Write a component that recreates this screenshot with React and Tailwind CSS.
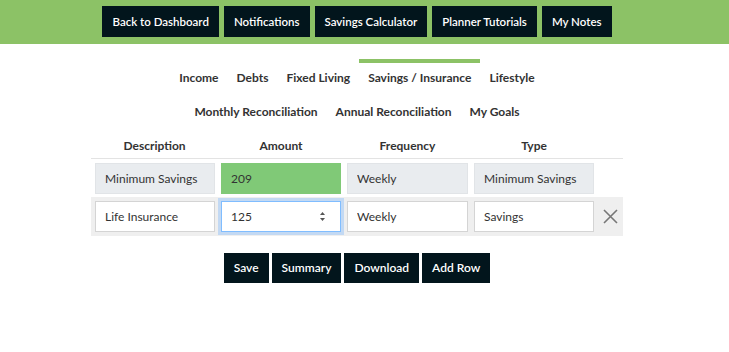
import React from 'react';

const topLinks = ['Back to Dashboard', 'Notifications', 'Savings Calculator', 'Planner Tutorials', 'My Notes'];
const tabsOne = ['Income', 'Debts', 'Fixed Living', 'Savings / Insurance', 'Lifestyle'];
const tabsTwo = ['Monthly Reconciliation', 'Annual Reconciliation', 'My Goals'];

function Cell({ value, className = '' }) {
  return (
    <input
      readOnly
      value={value}
      className={`w-full h-[31px] px-[9px] text-[12px] text-[#333] border outline-none ${className}`}
    />
  );
}

function Spinner() {
  return (
    <svg width="7" height="13" viewBox="0 0 7 13" className="shrink-0">
      <path d="M1 5 L3.5 2 L6 5 Z" fill="#555" />
      <path d="M1 8 L3.5 11 L6 8 Z" fill="#555" />
    </svg>
  );
}

export default function App() {
  return (
    <div className="w-full bg-white min-h-[352px]" style={{ fontFamily: 'Lato, "Open Sans", sans-serif' }}>
      <div className="h-[44px] bg-[#8cc266]">
        <div className="w-[714px] flex justify-center items-start pt-[6px] gap-[5px]">
          {topLinks.map((t) => (
            <button key={t} className="h-[31px] px-[10px] bg-[#02151c] text-white text-[11.5px] font-semibold">
              {t}
            </button>
          ))}
        </div>
      </div>

      <div className="w-[714px]">
        <div className="flex justify-center mt-[15px]">
          {tabsOne.map((t) => (
            <div
              key={t}
              className={`px-[9px] pt-[6px] pb-[5px] text-[12px] font-bold text-[#333] border-t-4 ${
                t === 'Savings / Insurance' ? 'border-[#8cc266]' : 'border-transparent'
              }`}
            >
              {t}
            </div>
          ))}
        </div>
        <div className="flex justify-center mt-[10px]">
          {tabsTwo.map((t) => (
            <div key={t} className="px-[9px] py-[1px] text-[12px] font-bold text-[#333]">
              {t}
            </div>
          ))}
        </div>

        <div className="w-[532px] mx-auto mt-[12px]">
          <div className="grid grid-cols-[127px_126px_127px_126px_26px] h-[25px] items-center border-b border-[#e3e3e3] text-[12px] font-bold text-[#333]">
            <div className="text-center">Description</div>
            <div className="text-center">Amount</div>
            <div className="text-center">Frequency</div>
            <div className="text-center">Type</div>
            <div />
          </div>
          <div className="grid grid-cols-[127px_126px_127px_126px_26px] h-[38px] items-center">
            <div className="pl-[4px] pr-[3px]">
              <Cell value="Minimum Savings" className="bg-[#e9ecef] border-[#e1e4e7]" />
            </div>
            <div className="px-[3px]">
              <Cell value="209" className="bg-[#80c977] border-[#80c977]" />
            </div>
            <div className="px-[3px]">
              <Cell value="Weekly" className="bg-[#e9ecef] border-[#e1e4e7]" />
            </div>
            <div className="px-[3px]">
              <Cell value="Minimum Savings" className="bg-[#e9ecef] border-[#e1e4e7]" />
            </div>
            <div />
          </div>
          <div className="grid grid-cols-[127px_126px_127px_126px_26px] h-[39px] items-center bg-[#efefef]">
            <div className="pl-[4px] pr-[3px]">
              <Cell value="Life Insurance" className="bg-white border-[#d4d4d4]" />
            </div>
            <div className="px-[3px]">
              <div className="h-[31px] flex items-center bg-white border border-[#80bdff] ring-[3px] ring-[#c3d9f3] pl-[9px] pr-[14px]">
                <input readOnly value="125" className="flex-1 min-w-0 text-[12px] text-[#333] outline-none bg-transparent" />
                <Spinner />
              </div>
            </div>
            <div className="px-[3px]">
              <Cell value="Weekly" className="bg-white border-[#d4d4d4]" />
            </div>
            <div className="px-[3px]">
              <Cell value="Savings" className="bg-white border-[#d4d4d4]" />
            </div>
            <div className="flex justify-center">
              <svg width="15" height="15" viewBox="0 0 15 15">
                <path d="M1 1 L14 14 M14 1 L1 14" stroke="#777" strokeWidth="1.6" />
              </svg>
            </div>
          </div>
        </div>

        <div className="flex justify-center gap-[3px] mt-[17px]">
          {['Save', 'Summary', 'Download', 'Add Row'].map((t) => (
            <button key={t} className="h-[30px] px-[10px] bg-[#02151c] text-white text-[12px] font-semibold">
              {t}
            </button>
          ))}
        </div>
      </div>
    </div>
  );
}
